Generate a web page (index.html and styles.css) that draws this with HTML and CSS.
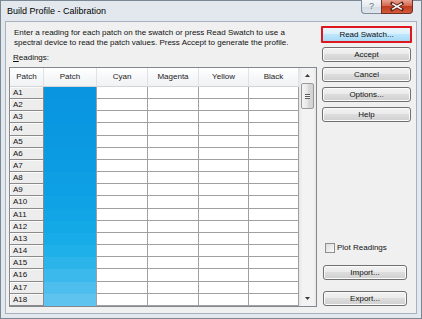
FILE: index.html
```html
<!DOCTYPE html>
<html>

<head>
    <title>Build Profile - Calibration</title>

    <link rel="stylesheet" href="styles.css">
</head>

<body>
    <div class="window">
        <div class="titlebar">
            <span class="title">Build Profile - Calibration</span>
            <div class="caption">
                <div class="cap-help">?</div>
                <div class="cap-close">
                    <svg width="31" height="13" viewBox="0 0 31 13">
                        <path d="M10.5 3.5 L20.5 9.5 M20.5 3.5 L10.5 9.5" stroke="#5e2418" stroke-width="3.4" stroke-linecap="square" fill="none" />
                        <path d="M10.5 3.5 L20.5 9.5 M20.5 3.5 L10.5 9.5" stroke="#ffffff" stroke-width="1.6" fill="none" />
                    </svg>
                </div>
            </div>
        </div>

        <div class="client">
            <div class="main">
                <p class="intro">Enter a reading for each patch on the swatch or press Read Swatch to use a<br>
                    spectral device to read the patch values. Press Accept to generate the profile.</p>
                <div class="label"><u>R</u>eadings:</div>

                <div class="grid" id="grid">
                    <div class="head">Patch</div>
                    <div class="head">Patch</div>
                    <div class="head">Cyan</div>
                    <div class="head">Magenta</div>
                    <div class="head">Yellow</div>
                    <div class="head">Black</div>
                    <div class="scroll">
                        <div class="arrow">
                            <svg width="5" height="3" viewBox="0 0 5 3"><polygon points="0,3 2.5,0 5,3" fill="#3a3a3a" /></svg>
                        </div>
                        <div class="thumb"><div class="grip"></div></div>
                        <div class="track"></div>
                        <div class="arrow">
                            <svg width="5" height="3" viewBox="0 0 5 3"><polygon points="0,0 2.5,3 5,0" fill="#3a3a3a" /></svg>
                        </div>
                    </div>
                </div>
            </div>

            <div class="side">
                <div class="btn focus">Read Swatch...</div>
                <div class="btn">Accept</div>
                <div class="btn">Cancel</div>
                <div class="btn">Options...</div>
                <div class="btn">Help</div>

                <div class="bottom">
                    <div class="check"><span class="box"></span>Plot Readings</div>
                    <div class="btn small">Import...</div>
                    <div class="btn small">Export...</div>
                </div>
            </div>
        </div>
    </div>

    <script>
        var colors = ["#0a95e0", "#0a96e0", "#0a97e1", "#0a98e1", "#0b99e2", "#0b9be2",
            "#0c9ce3", "#0d9ee3", "#0ea0e4", "#0fa2e4", "#11a5e5", "#13a8e6",
            "#17ace7", "#1eb0e9", "#2ab4ea", "#3cb9ec", "#4ebeee", "#5fc3f0"];
        var grid = document.getElementById("grid");

        for (var i = 0; i < colors.length; i++) {
            var str = "<div class='rowhead'>A" + (i + 1) + "</div>";
            str += "<div class='swatch' style='background-color:" + colors[i] + "'></div>";
            str += "<div class='cell'></div><div class='cell'></div><div class='cell'></div><div class='cell'></div>";
            grid.innerHTML += str; //one row per patch
        }
    </script>
</body>

</html>
```

FILE: styles.css
```css
body {
    margin: 0;
    font-family: "Liberation Sans", Arial, sans-serif;
    font-size: 8px;
    color: #111;
}

.window {
    width: 422px;
    height: 319px;
    box-sizing: border-box;
    border: 1px solid #7a8794;
    background-color: #e3e8ee;
    padding: 0 4px 4px 4px;
    display: flex;
    flex-direction: column;
}

.titlebar {
    height: 20px;
    display: flex;
    align-items: center;
    padding-left: 2px;
}

.title {
    font-size: 9px;
    color: #000;
}

.caption {
    margin-left: auto;
    margin-right: 4px;
    margin-top: -1px;
    align-self: flex-start;
    display: flex;
    height: 14px;
}

.cap-help {
    width: 20px;
    height: 14px;
    box-sizing: border-box;
    border: solid 1px #7d8a98;
    border-top: none;
    border-right: none;
    border-radius: 0 0 0 4px;
    background: linear-gradient(#f5f7f9, #e4e9ee 50%, #d3dae2 51%, #e0e6ec);
    color: #65727f;
    font-size: 9px;
    text-align: center;
    line-height: 13px;
}

.cap-close {
    width: 32px;
    height: 14px;
    flex: none;
    box-sizing: border-box;
    border: solid 1px #6e3024;
    border-top: none;
    border-radius: 0 0 4px 0;
    background-color: #c8462a;
    background-image: linear-gradient(#e8a290, #d4684f 45%, #c03c1f 50%, #d25b3a);
    display: flex;
    align-items: center;
    justify-content: center;
}

.client {
    flex: 1;
    min-height: 0;
    display: flex;
    border: solid 1px #a7b2be;
    background-color: #f0f0f0;
}

.main {
    width: 311px;
    box-sizing: border-box;
    padding-left: 3px;
}

.intro {
    margin: 6px 0 0 5px;
    line-height: 9.5px;
    white-space: nowrap;
}

.label {
    margin: 6px 0 0 4px;
    line-height: 9.5px;
}

.grid {
    margin-top: 4.5px;
    width: 308px;
    box-sizing: border-box;
    border: solid 1px #828790;
    background-color: #fff;
    display: grid;
    grid-template-columns: 34px 53px 51px 51px 50px 50px 17px;
    grid-template-rows: 19px repeat(18, 12.1667px);
}

.head {
    background: linear-gradient(#ffffff, #f7f8fa 50%, #f1f2f4);
    border-right: solid 1px #dfe2e6;
    border-bottom: solid 1px #d5d5d5;
    color: #222;
    text-align: center;
    line-height: 18px;
}

.rowhead {
    background-color: #ededed;
    border-right: solid 1px #8a8a8a;
    border-bottom: solid 1px #8a8a8a;
    box-shadow: inset 1px 1px 0 #fafafa;
    padding-left: 3px;
    line-height: 11px;
    overflow: hidden;
}

.swatch {
    border-right: solid 1px #a0a0a0;
}

.cell {
    border-right: solid 1px #a0a0a0;
    border-bottom: solid 1px #a0a0a0;
}

.scroll {
    grid-column: 7;
    grid-row: 1 / span 19;
    display: flex;
    flex-direction: column;
    background: linear-gradient(to right, #e6e6e6, #f3f3f3 20%, #f3f3f3 80%, #e9e9e9);
}

.arrow {
    height: 15px;
    display: flex;
    align-items: center;
    justify-content: center;
}

.thumb {
    height: 26px;
    margin: 0 2px 0 2px;
    box-sizing: border-box;
    border: solid 1px #9a9a9a;
    border-radius: 2px;
    background: linear-gradient(to right, #f4f4f4, #e6e6e6 50%, #d9d9d9 51%, #d2d2d2);
    display: flex;
    align-items: center;
    justify-content: center;
}

.grip {
    width: 5px;
    height: 5px;
    background: repeating-linear-gradient(#5c5c5c 0 1px, #f4f4f4 1px 2px);
}

.track {
    flex: 1;
}

.side {
    width: 89px;
    margin-left: 5px;
    padding: 5px 0 7px 0;
    display: flex;
    flex-direction: column;
}

.btn {
    height: 15px;
    box-sizing: border-box;
    margin-bottom: 5px;
    border: solid 1px #707070;
    border-radius: 3px;
    background: linear-gradient(#f2f2f2, #ebebeb 45%, #dddddd 50%, #cfcfcf);
    box-shadow: inset 0 0 0 1px #fbfbfb;
    text-align: center;
    line-height: 13px;
}

.focus {
    height: 17px;
    margin: -1px -1px 4px -1px;
    border: solid 2px #e0161f;
    border-radius: 1px;
    background: linear-gradient(#eaf6fd, #d9f0fc 45%, #bee6fd 50%, #a7d9f5);
    box-shadow: none;
}

.bottom {
    margin-top: auto;
    display: flex;
    flex-direction: column;
}

.check {
    height: 11px;
    margin-left: 3px;
    display: flex;
    align-items: center;
}

.box {
    width: 10px;
    height: 10px;
    box-sizing: border-box;
    border: solid 1px #8f8f8f;
    background: linear-gradient(135deg, #dcdcdc, #fbfbfb);
    margin-right: 2px;
}

.small {
    width: 84px;
    margin: 12px 0 0 1px;
}

.small + .small {
    margin-top: 11px;
    margin-bottom: 0;
}
```
